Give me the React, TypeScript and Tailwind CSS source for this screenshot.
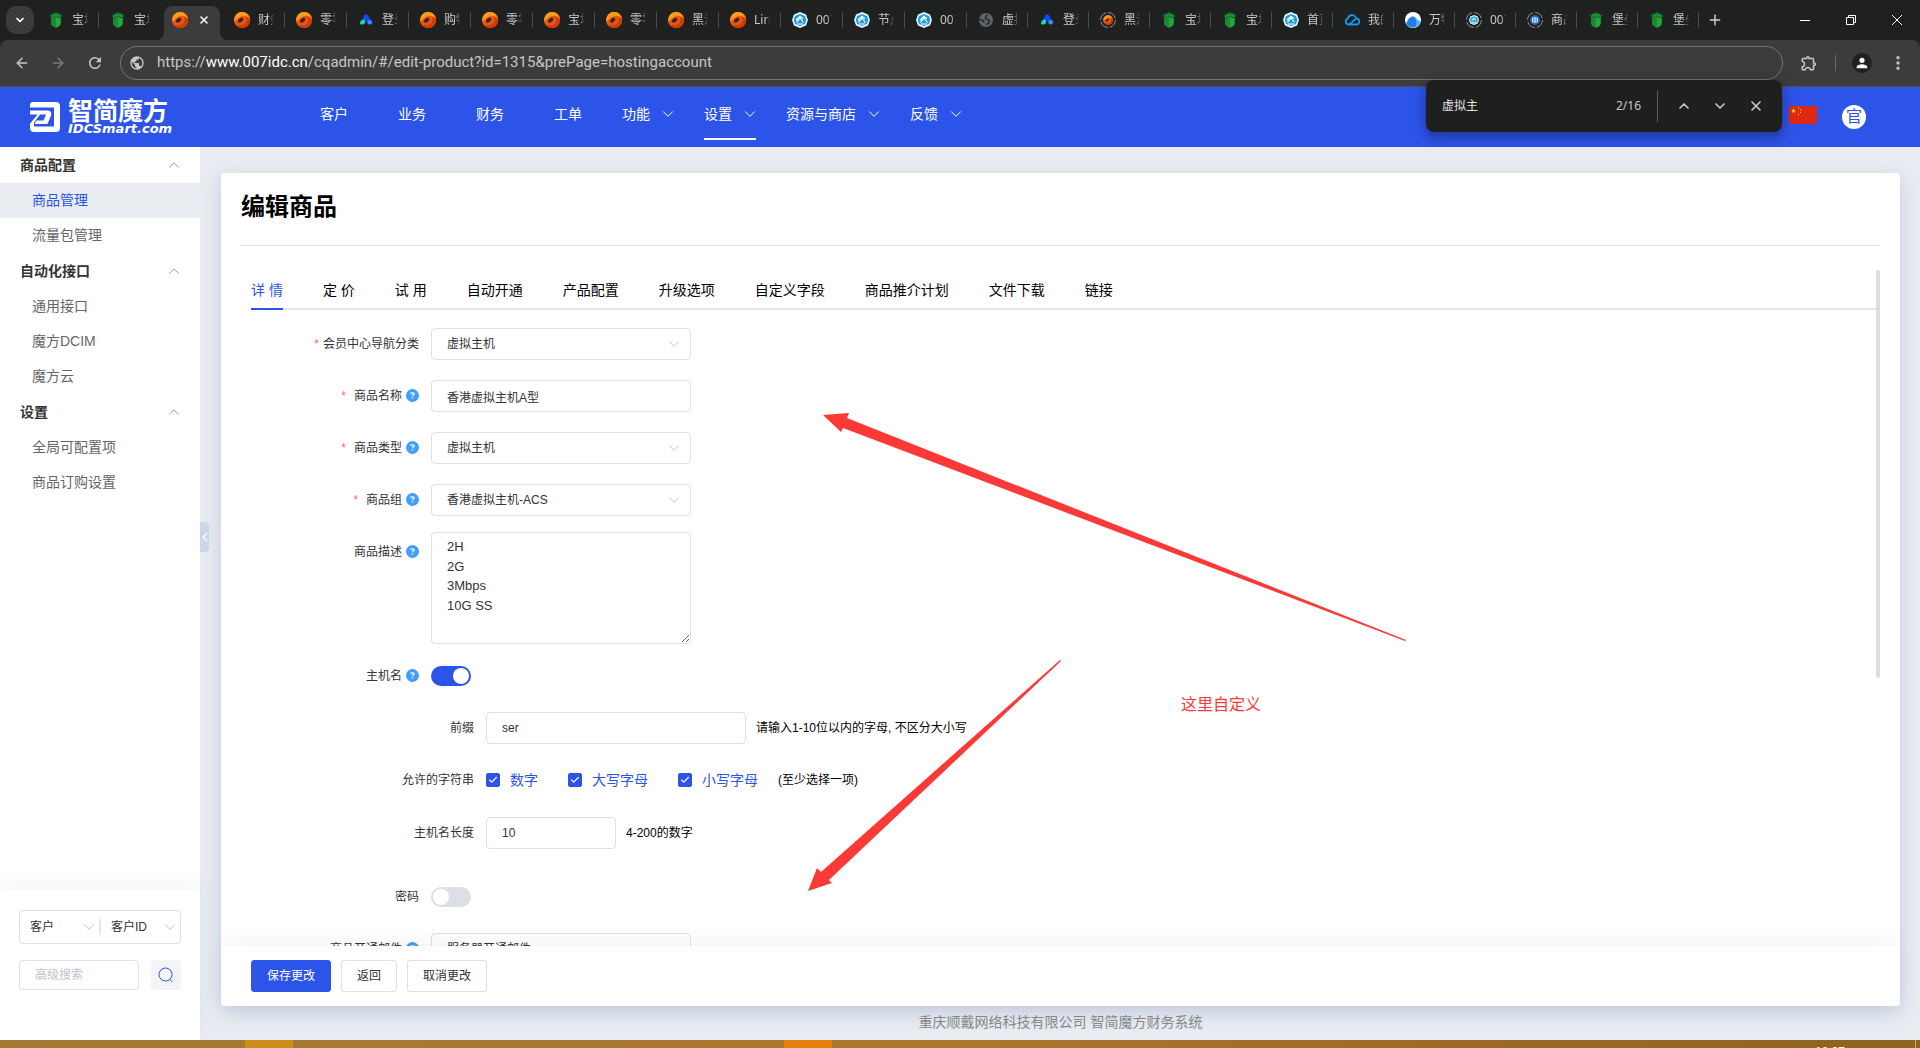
import React from "react";
import { ChevronDown, ChevronUp, X, ArrowLeft, ArrowRight, Plus, EllipsisVertical, Check } from "lucide-react";
import { FaCircleQuestion } from "react-icons/fa6";
import { MdRefresh, MdPublic, MdPerson, MdOutlineExtension } from "react-icons/md";

type Favicon = "bt" | "swirl" | "peaks" | "hex" | "globe" | "ringSwirl" | "cloud" | "wave" | "ringHex" | "ringGrid";

const browserTabs: { icon: Favicon; title: string }[] = [
  { icon: "bt", title: "宝塔" },
  { icon: "bt", title: "宝塔" },
  { icon: "swirl", title: "" },
  { icon: "swirl", title: "财务" },
  { icon: "swirl", title: "零零" },
  { icon: "peaks", title: "登录" },
  { icon: "swirl", title: "购物" },
  { icon: "swirl", title: "零零" },
  { icon: "swirl", title: "宝塔" },
  { icon: "swirl", title: "零零" },
  { icon: "swirl", title: "黑洞" },
  { icon: "swirl", title: "Lin" },
  { icon: "hex", title: "007" },
  { icon: "hex", title: "节点" },
  { icon: "hex", title: "007" },
  { icon: "globe", title: "虚拟" },
  { icon: "peaks", title: "登录" },
  { icon: "ringSwirl", title: "黑洞" },
  { icon: "bt", title: "宝塔" },
  { icon: "bt", title: "宝塔" },
  { icon: "hex", title: "首页" },
  { icon: "cloud", title: "我的" },
  { icon: "wave", title: "万物" },
  { icon: "ringHex", title: "007" },
  { icon: "ringGrid", title: "商品" },
  { icon: "bt", title: "堡垒" },
  { icon: "bt", title: "堡垒" },
];

function ThinChevron({ dir = "down", className = "" }: { dir?: "down" | "up"; className?: string }) {
  const paths = {
    down: "M1.500 3.800 6 8.300 10.500 3.800",
    up: "M1.500 8.300 6 3.800 10.500 8.300",
  };
  return (
    <svg viewBox="0 0 12 12" className={"size-3 shrink-0 " + className} fill="none" stroke="currentColor" strokeLinecap="round" aria-hidden="true">
      <path d={paths[dir]} />
    </svg>
  );
}

function SwirlShape() {
  return (
    <>
      <path d="M7.500 0C12.500-.3 16 3.600 16 8c0 4.500-3.300 8-8 8-3.800 0-6.900-2.500-7.800-6C-.5 5 2.700.5 7.500 0Z" fill="#e8560f" />
      <path d="M7 .1c5-.6 8.800 3 9 7.400-2.200-3.500-5.600-4.500-9-3-4 1.900-5 4.500-6.500 5.200C-.6 5.200 2.500.6 7 .1Z" fill="#f99b1c" />
      <path d="M2.300 12.800c4 1.700 8.500.7 10.100-3.500.6-1.800.2-3.400-.7-4.500C14.700 5.400 16 7 16 8c0 4.700-3.300 8-8 8-2.300 0-4.400-1.200-5.700-3.200Z" fill="#d13a0c" />
      <ellipse cx="6.600" cy="8.200" rx="3" ry="1.900" transform="rotate(-35 6.600 8.200)" fill="#33261f" />
    </>
  );
}

function HexShape() {
  return (
    <>
      <path d="M8 0 14 2.500 16 8l-2 5.500L8 16 2 13.500 0 8l2-5.500Z" fill="#e9f6fd" />
      <path d="M8 2 12.900 4 14.300 8l-1.400 4L8 14 3.100 12 1.700 8l1.400-4Z" fill="#1b9be0" />
      <path d="M4.500 10.500 8 6l1.500 2L11.500 10.500M4 8.200 8 4.300l3 2.500M5 12h6" stroke="#fff" strokeWidth="1.200" fill="none" />
    </>
  );
}

function Ring() {
  return <circle cx="8" cy="8" r="7.400" fill="none" stroke="#8d9393" strokeWidth="1" strokeDasharray="9.600 2" />;
}

function TabIcon({ icon }: { icon: Favicon }) {
  return (
    <svg viewBox="0 0 16 16" className="size-4 shrink-0" aria-hidden="true">
      {icon === "bt" && (
        <>
          <path d="M7.500 0h1v1.500L13 1.800 11.300 2.900 14.800 3.800 13 4.500 14 5.600 9 4.800h-2L2 5.600 3 4.500 1.200 3.800 4.700 2.900 3 1.800 7.500 1.500Z" fill="#1c8f34" />
          <path d="M3.200 6 8 5l4.800 1v5.500c0 2-2.400 3.300-4.800 4.300-2.400-1-4.800-2.300-4.800-4.300Z" fill="#22a83e" />
          <path d="M3.200 6 8 5v10.800c-2.400-1-4.800-2.300-4.800-4.300Z" fill="#1b8a33" />
        </>
      )}
      {icon === "swirl" && <SwirlShape />}
      {icon === "peaks" && (
        <>
          <path d="M8 4.500 11.500 10.200" stroke="#0a4ff5" strokeWidth="4.400" strokeLinecap="round" />
          <path d="M7.800 5 5 9" stroke="#0a4ff5" strokeWidth="3.400" strokeLinecap="round" />
          <circle cx="11.800" cy="10.300" r="2.300" fill="#3d8bff" />
          <path d="M2 11C2.300 8.500 4.300 7.300 6.500 7.800c1.300 2.500.5 4.300-1.700 4.700-1.600.3-2.900-.1-2.800-1.500Z" fill="#16dcae" />
        </>
      )}
      {icon === "hex" && <HexShape />}
      {icon === "globe" && (
        <>
          <circle cx="8" cy="8" r="7" fill="#5f6368" />
          <path d="M9 2.500c1 2-2.500 2-1.500 4s4 0 4 2.500-1.500 3-3 3.500M1.500 7.500c2 0 4 1 4.500 3" stroke="#26292b" strokeWidth="1.600" fill="none" />
        </>
      )}
      {icon === "ringSwirl" && (
        <>
          <Ring />
          <g transform="translate(3.200 3.200) scale(.6)"><SwirlShape /></g>
        </>
      )}
      {icon === "cloud" && (
        <path d="M5 12.500h7a3 3 0 0 0 .5-6C11 6.500 7 12.500 4.500 12.500a3 3 0 0 1-.8-5.800A4.300 4.300 0 0 1 11.500 5" fill="none" stroke="#1495ee" strokeWidth="1.900" strokeLinecap="round" />
      )}
      {icon === "wave" && (
        <>
          <circle cx="8" cy="8" r="8" fill="#fff" />
          <path d="M1.200 11.500C3 6.500 6 4 8.500 4.500c3 .7 3 4.500 6.800 5-1 3.700-4 6-7.300 6-3 0-5.600-1.600-6.800-4Z" fill="#1e7fe6" />
          <path d="M9.500 5c2.700 1 3 4 5.800 4.500-1 3.200-3 5.200-5.500 5.700C12.500 12.500 11.500 8 9.500 5Z" fill="#57b4f7" />
        </>
      )}
      {icon === "ringHex" && (
        <>
          <Ring />
          <g transform="translate(3 3) scale(.625)"><HexShape /></g>
        </>
      )}
      {icon === "ringGrid" && (
        <>
          <Ring />
          <circle cx="8" cy="8" r="5" fill="#2467c4" />
          <path d="M5.500 6h5v4h-5ZM8 5v6M5.500 8h5" stroke="#d8e8ff" strokeWidth=".9" fill="none" />
        </>
      )}
    </svg>
  );
}

function BrowserTabs() {
  return (
    <div className="flex h-10 shrink-0 items-end bg-[#1f2121] text-xs text-[#c7c7c7]">
      <button aria-label="搜索标签页" className="mb-[6px] ml-[6px] flex h-7 w-7 shrink-0 items-center justify-center rounded-[10px] bg-[#3c3c3c] text-white">
        <ChevronDown className="size-3" strokeWidth={3.500} />
      </button>
      <div className="ml-[3px] flex min-w-0 items-end">
        {browserTabs.map((tab, i) =>
          i === 2 ? (
            <div key={i} className="relative flex h-[34px] w-[62px] justify-center">
              <svg viewBox="0 0 72 34" className="absolute bottom-0 h-[34px] w-[72px] max-w-none" aria-hidden="true">
                <path d="M0 34C5 34 8 31 8 26V9C8 4 11 0 16 0H56C61 0 64 4 64 9V26C64 31 67 34 72 34Z" fill="#3c3c3c" />
              </svg>
              <div className="relative flex h-7 w-full items-center pl-[11px]">
                <TabIcon icon={tab.icon} />
                <button aria-label="关闭标签页" className="ml-[10px] text-white">
                  <X className="size-3" strokeWidth={3} />
                </button>
              </div>
            </div>
          ) : (
            <div
              key={i}
              className={
                "flex h-[34px] items-center pb-[6px] pl-[11px] " +
                (i < 15 ? "w-[62px]" : "w-[61px]")
              }
            >
              <TabIcon icon={tab.icon} />
              <span className="ml-2 w-4 overflow-hidden whitespace-nowrap [mask-image:linear-gradient(to_right,black_70%,transparent)]">{tab.title}</span>
              <span className={"ml-auto h-4 w-px " + (i === 1 ? "" : "bg-[#4a4c4c]")} />
            </div>
          ),
        )}
        <button aria-label="新标签页" className="ml-[8px] flex h-[34px] items-center pb-[6px] text-[#d0d0d0]">
          <Plus className="size-4" strokeWidth={2.200} />
        </button>
      </div>
      <div className="ml-auto flex h-10 items-center text-white">
        <button aria-label="最小化" className="flex w-[46px] justify-center">
          <span className="h-px w-[10px] bg-white" />
        </button>
        <button aria-label="还原" className="flex w-[46px] justify-center">
          <svg viewBox="0 0 10 10" className="size-[10px]" fill="none" stroke="currentColor">
            <path d="M.5 2.500h7v7h-7ZM2.500 2.500v-2h7v7h-2" />
          </svg>
        </button>
        <button aria-label="关闭" className="flex w-[46px] justify-center">
          <svg viewBox="0 0 10 10" className="size-[10px]" fill="none" stroke="currentColor">
            <path d="M0 0 10 10M10 0 0 10" />
          </svg>
        </button>
      </div>
    </div>
  );
}

function AddressBar() {
  return (
    <div className="bg-[#1f2121]">
      <div className="flex h-[47px] items-center rounded-t-lg border-b border-[#4e4e4e] bg-[#3c3c3c] pl-[14px] text-[#c7c7c7]">
        <div className="flex w-[106px] items-center gap-5">
          <button aria-label="后退"><ArrowLeft className="size-4" strokeWidth={2.200} /></button>
          <button aria-label="前进" className="text-[#7c7c7c]"><ArrowRight className="size-4" strokeWidth={2.200} /></button>
          <button aria-label="刷新"><MdRefresh className="size-[18px]" /></button>
        </div>
        <div className="mb-px flex h-[34px] flex-1 items-center rounded-full border border-[#757575] pl-2">
          <MdPublic className="size-4" />
          <a href="#url" className="ml-3 font-['Roboto',sans-serif] text-[15px] text-[#c7c7c7]">
            https://<span className="text-white">www.007idc.cn</span>/cqadmin/#/edit-product?id=1315&amp;prePage=hostingaccount
          </a>
        </div>
        <button aria-label="扩展程序" className="ml-[17px]"><MdOutlineExtension className="size-[18px]" /></button>
        <span className="ml-[17px] h-4 w-px bg-[#6a6a6a]" />
        <button aria-label="个人资料" className="ml-[16px] flex size-5 items-center justify-center rounded-full bg-[#1f2121] text-white">
          <MdPerson className="size-4" />
        </button>
        <button aria-label="菜单" className="mr-[13px] ml-[17px]"><EllipsisVertical className="size-[18px]" strokeWidth={2.500} /></button>
      </div>
    </div>
  );
}

function FindBar() {
  return (
    <div className="absolute top-20 right-[138px] z-30 flex h-[52px] w-[356px] items-center rounded-lg bg-[#1f1f1f] pr-[18px] pl-4 text-[#c7c7c7] shadow-[0_4px_14px_rgba(0,0,0,0.4)]">
      <input aria-label="在页面中查找" defaultValue="虚拟主" className="min-w-0 flex-1 bg-transparent text-xs text-[#e3e3e3] outline-none" />
      <span className="text-xs">2/16</span>
      <span className="mr-[18px] ml-4 h-8 w-px bg-[#5a5a5a]" />
      <div className="flex gap-5">
        <button aria-label="上一个"><ChevronUp className="size-4" strokeWidth={2.500} /></button>
        <button aria-label="下一个"><ChevronDown className="size-4" strokeWidth={2.500} /></button>
        <button aria-label="关闭查找"><X className="size-4" strokeWidth={2.500} /></button>
      </div>
    </div>
  );
}

const navItems = [
  { label: "客户" },
  { label: "业务" },
  { label: "财务" },
  { label: "工单" },
  { label: "功能", menu: true },
  { label: "设置", menu: true, active: true },
  { label: "资源与商店", menu: true },
  { label: "反馈", menu: true },
];

function SiteHeader() {
  return (
    <header className="flex h-[60px] shrink-0 items-stretch bg-[#2d54e9] text-white">
      <a href="#home" className="flex w-[310px] items-center pl-[30px]">
        <svg viewBox="0 0 30 30" className="size-[30px]" aria-hidden="true">
          <path d="M0 3C0 1 1 0 3 0H26C28.500 0 30 1.500 30 4V26C30 28.500 28.500 30 26 30H4C1.500 30 0 28.500 0 26V22L4 17V24.500H24V5.500H0Z" fill="#fff" />
          <path d="M0 8.500H17C20.500 8.500 22 10.500 21 13.500L17.500 22H4.500L6.500 18.500H13.500L16 12.500H10L3 22H0L7.500 12.500H0Z" fill="#fff" />
        </svg>
        <span className="ml-2 flex flex-col">
          <span className="text-[25px] leading-6 font-bold">智简魔方</span>
          <span className="font-['DejaVu_Sans',sans-serif] text-[13px] leading-3 font-bold italic">IDCSmart.com</span>
        </span>
      </a>
      <nav className="flex gap-[30px] text-sm">
        {navItems.map((item) => (
          <a
            key={item.label}
            href="#nav"
            className={
              "mb-[7px] flex items-center border-b-2 pt-[2px] whitespace-nowrap " +
              (item.menu ? "gap-3 " : "px-[10px] ") +
              (item.active ? "border-white" : "border-transparent")
            }
          >
            {item.label}
            {item.menu && <ThinChevron />}
          </a>
        ))}
      </nav>
      <div className="mr-[54px] ml-auto flex items-center gap-[25px] pb-1">
        <button aria-label="语言">
          <svg viewBox="0 0 28 18" className="h-[18px] w-7">
            <path d="M0 0h28v18H0Z" fill="#de2910" />
            <path d="m4.500 2 .7 1.900h2L5.600 5.100l.6 2-1.700-1.200-1.700 1.200.6-2L1.800 3.900h2Z" fill="#ffde00" />
            <path d="M9 1.500h1v1H9ZM11 3.500h1v1h-1ZM11 6h1v1h-1ZM9 8h1v1H9Z" fill="#ffde00" />
          </svg>
        </button>
        <button className="mt-1 flex size-6 items-center justify-center rounded-full bg-white text-base leading-none text-[#2d54e9]">官</button>
      </div>
    </header>
  );
}

const menuGroups = [
  { title: "商品配置", items: ["商品管理", "流量包管理"] },
  { title: "自动化接口", items: ["通用接口", "魔方DCIM", "魔方云"] },
  { title: "设置", items: ["全局可配置项", "商品订购设置"] },
];

function Sidebar() {
  return (
    <aside className="relative flex w-[200px] shrink-0 flex-col bg-white text-sm">
      <nav className="flex-1">
        {menuGroups.map((group) => (
          <section key={group.title}>
            <button className="flex h-9 w-full items-center justify-between px-5 font-bold text-[#333]">
              {group.title}
              <ThinChevron dir="up" className="text-[#999]" />
            </button>
            {group.items.map((item) => (
              <a
                key={item}
                href="#menu"
                className={
                  "flex h-[35px] items-center pb-[2px] pl-8 " +
                  (item === "商品管理" ? "bg-[#e9edf2] text-[#2d54e9]" : "text-[#666]")
                }
              >
                {item}
              </a>
            ))}
          </section>
        ))}
      </nav>
      <form className="h-[150px] px-[19px] pt-5 text-xs text-[#333] shadow-[0_-6px_18px_rgba(60,90,150,0.06)]">
        <div className="flex h-[34px] items-center rounded border border-[#dcdfe6]">
          <SearchSelect label="搜索类别" value="客户" />
          <span className="h-4 w-[2px] bg-[#e4e7ed]" />
          <SearchSelect label="搜索字段" value="客户ID" />
        </div>
        <div className="mt-4 flex items-center gap-3">
          <input aria-label="高级搜索" placeholder="高级搜索" className="h-[30px] min-w-0 flex-1 rounded border border-[#dcdfe6] px-[15px] outline-none placeholder:text-[#c0c4cc]" />
          <button type="button" aria-label="搜索" className="flex size-[30px] items-center justify-center rounded bg-[#f4f4f7] text-[#2d54e9]">
            <svg viewBox="0 0 16 16" className="size-4" fill="none" stroke="currentColor">
              <circle cx="7.500" cy="7.500" r="6.500" />
              <path d="m12 12.500 2.500 2.500" />
            </svg>
          </button>
        </div>
      </form>
      <button aria-label="收起菜单" className="absolute top-[375px] left-full z-10 flex h-[30px] w-[9px] items-center justify-center rounded-r bg-[#ced5e8] text-white">
        <svg viewBox="0 0 6 10" className="h-[10px] w-[6px]" fill="none" stroke="currentColor" strokeWidth="1.300" aria-hidden="true">
          <path d="M5 1 1 5l4 4" />
        </svg>
      </button>
    </aside>
  );
}

function SearchSelect({ label, value }: { label: string; value: string }) {
  return (
    <span className="relative flex flex-1 items-center">
      <select aria-label={label} className="w-full appearance-none bg-transparent pl-[10px] outline-none">
        <option>{value}</option>
      </select>
      <ThinChevron className="pointer-events-none absolute right-1 text-[#c0c4cc]" />
    </span>
  );
}

const productTabs = ["详 情", "定 价", "试 用", "自动开通", "产品配置", "升级选项", "自定义字段", "商品推介计划", "文件下载", "链接"];

const fieldBox = "h-8 rounded border border-[#dcdfe6] bg-white pl-[15px] text-xs text-[#333] outline-none";

function FieldLabel({ id, text, required, help, nested }: { id: string; text: string; required?: boolean; help?: boolean; nested?: boolean }) {
  return (
    <label
      htmlFor={id}
      className={"flex h-8 shrink-0 items-center justify-end text-xs whitespace-nowrap text-[#333] " + (nested ? "w-[223px]" : "w-[168px]")}
    >
      {required && <span className={"text-[#f56c6c] " + (help ? "mr-2" : "mr-1")}>*</span>}
      {text}
      {help && <FaCircleQuestion className="mb-[2px] ml-1 size-[13px] text-[#409eff]" />}
    </label>
  );
}

function SelectBox({ id, value }: { id: string; value: string }) {
  return (
    <span className="relative flex w-[260px] items-center">
      <select id={id} className={fieldBox + " w-full appearance-none"}>
        <option>{value}</option>
      </select>
      <ThinChevron className="pointer-events-none absolute right-[11px] text-[#c0c4cc]" />
    </span>
  );
}

function Switch({ id, on }: { id: string; on?: boolean }) {
  return (
    <input
      id={id}
      type="checkbox"
      role="switch"
      defaultChecked={on}
      className="h-5 w-10 appearance-none rounded-full bg-[#dcdfe6] p-[2px] before:block before:size-4 before:rounded-full before:bg-white checked:bg-[#2d54e9] checked:before:ml-5"
    />
  );
}

function CharOption({ text }: { text: string }) {
  return (
    <label className="mr-[30px] flex items-center text-sm text-[#2d54e9]">
      <span className="relative flex size-[14px] items-center justify-center">
        <input type="checkbox" defaultChecked className="size-[14px] appearance-none rounded-xs border border-[#dcdfe6] checked:border-[#2d54e9] checked:bg-[#2d54e9]" />
        <Check className="pointer-events-none absolute size-[10px] text-white" strokeWidth={3} />
      </span>
      <span className="ml-[10px]">{text}</span>
    </label>
  );
}

function ProductForm() {
  return (
    <form className="flex flex-col gap-5 pt-[18px]">
      <div className="flex gap-3">
        <FieldLabel id="nav-category" text="会员中心导航分类" required />
        <SelectBox id="nav-category" value="虚拟主机" />
      </div>
      <div className="flex gap-3">
        <FieldLabel id="name" text="商品名称" required help />
        <input id="name" defaultValue="香港虚拟主机A型" className={fieldBox + " w-[260px]"} />
      </div>
      <div className="flex gap-3">
        <FieldLabel id="type" text="商品类型" required help />
        <SelectBox id="type" value="虚拟主机" />
      </div>
      <div className="flex gap-3">
        <FieldLabel id="group" text="商品组" required help />
        <SelectBox id="group" value="香港虚拟主机-ACS" />
      </div>
      <div className="-my-1 flex gap-3">
        <div className="pt-1">
          <FieldLabel id="description" text="商品描述" help />
        </div>
        <textarea
          id="description"
          defaultValue={"2H\n2G\n3Mbps\n10G SS"}
          className="h-28 w-[260px] rounded border border-[#dcdfe6] px-[15px] py-1 text-[13px] leading-normal text-[#333] outline-none"
        />
      </div>
      <div className="flex items-center gap-3">
        <FieldLabel id="hostname" text="主机名" help />
        <Switch id="hostname" on />
      </div>
      <div className="flex items-center gap-3">
        <FieldLabel id="prefix" text="前缀" nested />
        <input id="prefix" defaultValue="ser" className={fieldBox + " w-[260px]"} />
        <span className="-ml-[2px] text-xs text-black">请输入1-10位以内的字母, 不区分大小写</span>
      </div>
      <div className="flex h-8 items-center gap-3">
        <span className="w-[223px] text-right text-xs text-[#333]">允许的字符串</span>
        <div className="flex items-center">
          <CharOption text="数字" />
          <CharOption text="大写字母" />
          <CharOption text="小写字母" />
          <span className="-ml-[10px] text-xs text-black">(至少选择一项)</span>
        </div>
      </div>
      <div className="flex items-center gap-3 pt-px">
        <FieldLabel id="length" text="主机名长度" nested />
        <input id="length" defaultValue="10" className={fieldBox + " w-[130px]"} />
        <span className="-ml-[2px] text-xs text-black">4-200的数字</span>
      </div>
      <div className="mt-3 flex items-center gap-3">
        <FieldLabel id="password" text="密码" />
        <Switch id="password" />
      </div>
      <div className="flex gap-3">
        <FieldLabel id="mail" text="商品开通邮件" help />
        <SelectBox id="mail" value="服务器开通邮件" />
      </div>
    </form>
  );
}

function Annotations() {
  return (
    <>
      <svg viewBox="0 0 620 490" className="pointer-events-none absolute top-[240px] left-[580px] h-[490px] w-[620px]" fill="#fb3a37" aria-hidden="true">
        <path d="M22 2 48 0 46 5 605 227 604 228 42 15 40 19Z" />
        <path d="M7 478 16 455 20 459 259 247 260 248 28 467 31 470Z" />
      </svg>
      <span className="pointer-events-none absolute top-[520px] left-[960px] text-base text-[#fb3a37]">这里自定义</span>
    </>
  );
}

export default function App() {
  return (
    <div className="relative flex h-screen flex-col overflow-hidden bg-[#e9edf2] font-['Liberation_Sans','Noto_Sans_CJK_SC',sans-serif]">
      <div className="shrink-0 font-['Noto_Sans','Noto_Sans_CJK_SC',sans-serif]">
        <BrowserTabs />
        <AddressBar />
        <FindBar />
      </div>
      <SiteHeader />
      <div className="flex min-h-0 flex-1">
        <Sidebar />
        <main className="flex min-w-0 flex-1 flex-col pt-[26px] pr-5 pl-[21px]">
          <section className="relative flex min-h-0 flex-1 flex-col rounded bg-white shadow-[0_6px_20px_rgba(80,105,165,0.25)]">
            <div className="mx-5 flex h-[73px] shrink-0 items-center border-b border-[#dcdfe6] pb-1">
              <h1 className="text-2xl font-bold text-black">编辑商品</h1>
            </div>
            <div className="mx-5 mt-6 flex min-h-0 flex-1 overflow-hidden">
              <div className="min-w-0 flex-1 pl-[10px]">
                <div role="tablist" className="flex h-10 gap-10 border-b-2 border-[#e4e7ed] text-sm">
                  {productTabs.map((tab, i) => (
                    <button
                      key={tab}
                      role="tab"
                      aria-selected={i === 0}
                      className={
                        "-mb-[2px] border-b-2 pt-[2px] whitespace-nowrap " +
                        (i === 0 ? "border-[#2d54e9] text-[#2d54e9]" : "border-transparent text-black")
                      }
                    >
                      {tab}
                    </button>
                  ))}
                </div>
                <ProductForm />
              </div>
              <div className="h-[408px] w-1 rounded-full bg-[#dddddd]" />
            </div>
            <div className="relative flex h-[60px] shrink-0 items-center gap-[10px] rounded-b bg-white pl-[30px] text-xs text-[#333] shadow-[0_-6px_18px_rgba(60,90,150,0.06)]">
              <button className="h-8 rounded-[3px] border border-[#2d54e9] bg-[#2d54e9] px-[15px] text-white">保存更改</button>
              <button className="h-8 rounded-[3px] border border-[#dcdfe6] px-[15px]">返回</button>
              <button className="h-8 rounded-[3px] border border-[#dcdfe6] px-[15px]">取消更改</button>
            </div>
            <Annotations />
          </section>
          <footer className="flex h-[34px] shrink-0 items-center justify-center pb-[2px] text-sm text-[#888]">重庆顺戴网络科技有限公司 智简魔方财务系统</footer>
        </main>
      </div>
      <div className="flex h-2 shrink-0 overflow-hidden bg-linear-to-r from-[#a67a33] via-[#a8772e] to-[#8f6120]">
        <span className="ml-[245px] w-12 bg-[#ce8d1a]" />
        <span className="ml-[491px] w-12 bg-[#e67e0e]" />
        <span className="mr-[70px] ml-auto h-4 pt-[4px] text-xs leading-4 text-white">10:37</span>
        <span className="mr-1 w-px bg-[#c9ab7c]" />
      </div>
    </div>
  );
}
